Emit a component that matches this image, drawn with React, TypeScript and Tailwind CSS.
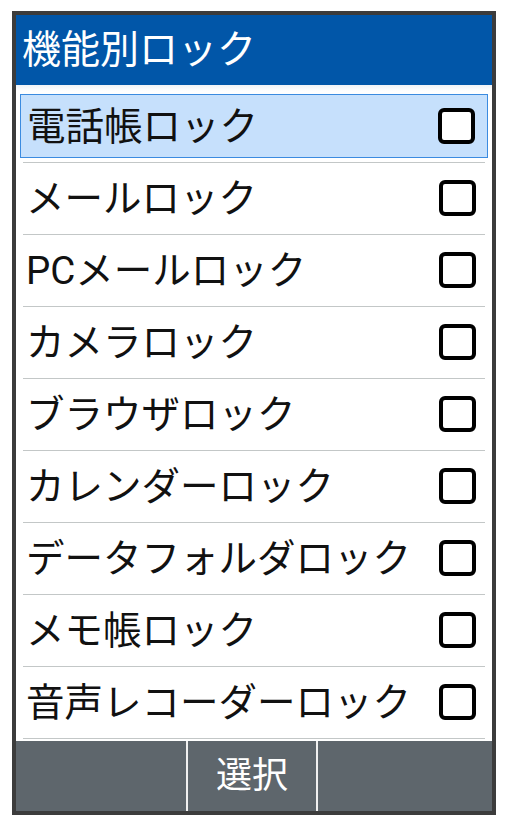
import React from "react";

const items = [
  "電話帳ロック",
  "メールロック",
  "PCメールロック",
  "カメラロック",
  "ブラウザロック",
  "カレンダーロック",
  "データフォルダロック",
  "メモ帳ロック",
  "音声レコーダーロック",
];

export default function App() {
  return (
    <div
      className="w-[507px] h-[826px] bg-white pt-[11px] pl-[12px]"
      style={{ fontFamily: 'Roboto, "Noto Sans CJK JP", "Noto Sans", sans-serif' }}
    >
      <div className="w-[484px] h-[804px] border-4 border-[#3c3c3c] flex flex-col bg-white">
        <div className="h-[70px] bg-[#0156a8] text-white text-[39px] leading-none flex items-center pl-[6px] shrink-0">
          機能別ロック
        </div>
        <div className="flex-1 pt-[6px] px-[4px] bg-gradient-to-b from-[#eef2f6] to-white to-[6px]">
          {items.map((t, i) => (
            <div key={i} className="h-[72px] flex flex-col">
              <div
                className={
                  "mt-[3px] h-[64px] flex items-center justify-between pl-[6px] pr-[12px] " +
                  (i === 0 ? "bg-[#c6e0fc] border-[1.5px] border-[#3b8be0]" : "")
                }
              >
                <span className="text-[38.5px] leading-none text-[#111] whitespace-nowrap pt-[2px]">{t}</span>
                <div className="w-[37px] h-[36px] border-4 border-black rounded-[6px] bg-white shrink-0" />
              </div>
              <div className="mt-auto mx-[3px] h-px bg-[#c3c7c7]" />
            </div>
          ))}
        </div>
        <div className="h-[70px] bg-[#5e666c] flex shrink-0">
          <div className="w-[172px] border-r-2 border-[#f0f0f0]" />
          <div className="w-[130px] border-r-2 border-[#f0f0f0] flex items-center justify-center text-white text-[36px] leading-none">
            選択
          </div>
          <div className="flex-1" />
        </div>
      </div>
    </div>
  );
}
